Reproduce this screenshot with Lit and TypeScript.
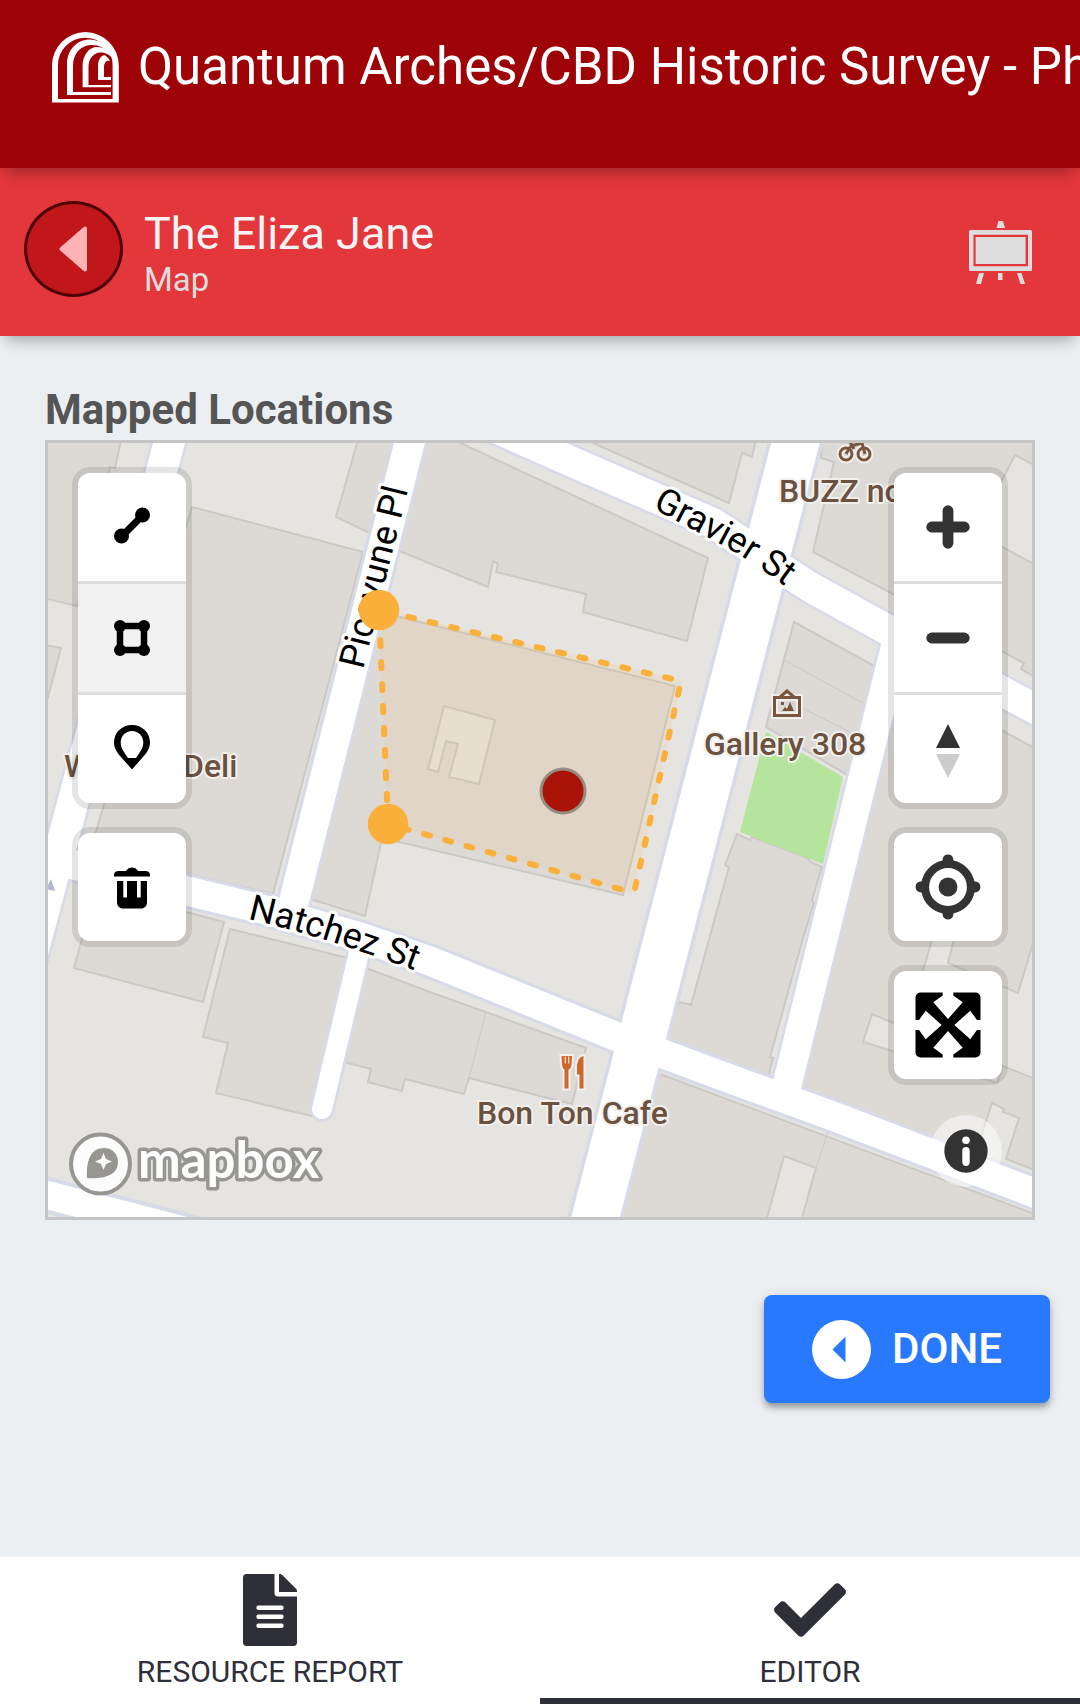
import { LitElement, html, svg, css } from "lit";
import { customElement, state } from "lit/decorators.js";
import { classMap } from "lit/directives/class-map.js";

/* Building footprints, in map units. */
const buildings: string[] = [
  "40,440 121,440 115,468 110,467 77,606 40,597",
  "40,644 61,648 48,697 40,720",
  "192,507 363,552 273,894 187,874 90,852",
  "358,440 336,517 368,532 402,552 488,587 493,561 498,564 496,572 586,594 583,612 687,641 708,558 454,440",
  "586,440 729,503 742,453 752,457 756,440",
  "384,613 675,686 623,895 382,838 365,916 304,897",
  "822,440 821,458 834,462 813,552 1024,663 1021,669 1040,680 1040,440",
  "794,622 878,668 851,777 766,727",
  "737,834 750,840 752,837 808,858 809,861 822,867 812,900 814,903 803,938 770,1057 773,1058 768,1078 664,1040 679,1002 691,1005 729,867 725,865",
  "900,676 1040,751 1040,1180 796,1090",
  "657,1073 1040,1216 1040,1225 615,1225",
  "96,888 224,922 203,1002 74,968",
  "230,929 352,959 312,1116 216,1093 228,1043 203,1037",
  "366,968 430,992 586,1048 572,1104 469,1078 464,1094 405,1079 402,1091 368,1082 371,1069 340,1061",
];

/* Courtyards and gaps cut out of the larger footprints. */
const yards: string[] = [
  "1015,455 1040,468 1040,567 985,538 1002,480",
  "444,706 495,720 479,784 449,777 458,744 446,741 438,772 428,769",
  "940,912 923,971 905,1028 872,1014 863,1042 997,1083 1003,1066 1040,1081 1040,920 1018,993 948,963 960,916",
  "992,1103 1004,1109 1003,1112 1019,1118 1006,1159 1040,1172 1040,1180 975,1155",
  "784,1156 816,1168 800,1225 765,1225",
];

const partyWalls: string[] = [
  "486,1012 469,1078",
  "784,660 863,703",
  "776,695 852,733",
  "816,1168 828,1132",
];

interface Road {
  line: string;
  casing: number;
  width: number;
}

const roads: Road[] = [
  { line: "172,432 20,1000", casing: 36, width: 31 },
  { line: "52,860 187,891 270,911 360,937 430,961 615,1036 725,1077 830,1115 1050,1199", casing: 35, width: 29 },
  { line: "412,433 293,905", casing: 36, width: 30 },
  { line: "362,940 322,1109", casing: 25, width: 20 },
  { line: "457,411 570,461 713,523 790,574 810,587 886,629 1050,717", casing: 35, width: 30 },
  { line: "798,433 593,1227", casing: 54, width: 47 },
  { line: "900,628 787,1085", casing: 34, width: 29 },
  { line: "20,1188 220,1240", casing: 36, width: 28 },
];

/* Sides of the drawn polygon, with the gap before the first dash. */
const sides: { d: string; lead: number }[] = [
  { d: "M379 610 681 681", lead: -30 },
  { d: "M681 681 634 893", lead: -8 },
  { d: "M634 893 388 824", lead: -14 },
  { d: "M388 824 379 610", lead: -24 },
];

const icon = {
  line: svg`<path d="M43 64 64 43" stroke="#000" stroke-width="7"/><circle cx="43.5" cy="63" r="7.5"/><circle cx="64.5" cy="42" r="7.5"/>`,
  polygon: svg`<rect x="42" y="42" width="24" height="24" fill="none" stroke="#000" stroke-width="6.5"/>
    <circle cx="42" cy="42" r="6"/><circle cx="66" cy="42" r="6"/><circle cx="66" cy="66" r="6"/><circle cx="42" cy="66" r="6"/>`,
  point: svg`<path fill-rule="evenodd" d="M54 30c-10 0-18 7.500-18 17.500 0 9 7 14 18 27 11-13 18-18 18-27C72 37.500 64 30 54 30zm0 6c6.500 0 11.300 5 11.300 11.500 0 6.500-4.300 10.500-7.300 15.500h-8c-3-5-7.300-9-7.300-15.500C42.700 41 47.500 36 54 36z"/>`,
  trash: svg`<path d="M36 43.500v-1.500c0-2.500 2-4 4.500-4H48c1.500-2.500 3.500-3.500 6-3.500s4.500 1 6 3.500h7.500c2.500 0 4.500 1.500 4.500 4v1.500z"/>
    <path d="M39 48h30v21c0 4-2.500 6.500-6 6.500H45c-3.500 0-6-2.500-6-6.500z"/><path fill="#fff" d="M45.300 48H49v16.500h-3.700zm13.700 0h3.700v16.500H59z"/>`,
  plus: svg`<path d="M54 37.700v32.600M37.700 54h32.600" stroke="#333" stroke-width="10.800" stroke-linecap="round"/>`,
  minus: svg`<path d="M37.700 54h32.600" stroke="#333" stroke-width="10.800" stroke-linecap="round"/>`,
  compass: svg`<path fill="#333" d="M42 53 54 29l12 24z"/><path fill="#ccc" d="m42 59 12 24 12-24z"/>`,
  locate: svg`<g transform="scale(5.4)" fill="#333"><path d="M10 4C9 4 9 5 9 5v.1A5 5 0 0 0 5.100 9H5s-1 0-1 1 1 1 1 1h.1A5 5 0 0 0 9 14.900v.1s0 1 1 1 1-1 1-1v-.1a5 5 0 0 0 3.900-3.900h.1s1 0 1-1-1-1-1-1h-.1A5 5 0 0 0 11 5.100V5s0-1-1-1zm0 2.500a3.500 3.500 0 1 1 0 7 3.500 3.500 0 1 1 0-7z"/><circle cx="10" cy="10" r="1.750"/></g>`,
  expand: svg`<g>${[
    "",
    "matrix(-1 0 0 1 108 0)",
    "matrix(1 0 0 -1 0 108)",
    "matrix(-1 0 0 -1 108 108)",
  ].map(
    (t) => svg`<path transform=${t} d="M21.500 49V26.500a5 5 0 0 1 5-5h22.200v3l-9.400 6.800L54 48v7h-5l-1.300-1L31.700 39.700 25 49z"/>`,
  )}</g>`,
};

@customElement("survey-map")
class SurveyMap extends LitElement {
  @state() private mode = "polygon";

  static styles = css`
    :host {
      display: block;
      position: relative;
      border: 3px solid #c5c5c5;
      overflow: hidden;
      background: #e5e4e0;
    }
    .canvas {
      display: block;
      width: 100%;
      height: auto;
    }
    .building {
      fill: #dddad6;
      stroke: #cbc9c5;
      stroke-width: 2;
    }
    .yard {
      fill: #e5e4e0;
      stroke: #cbc9c5;
      stroke-width: 2;
    }
    .wall {
      fill: none;
      stroke: #cbc9c5;
      stroke-width: 1;
    }
    .casing,
    .road {
      fill: none;
      stroke-linecap: round;
      stroke-linejoin: round;
    }
    .casing {
      stroke: #d7dae7;
    }
    .road {
      stroke: #fff;
    }
    .street,
    .place {
      font-family: Roboto, "Liberation Sans", sans-serif;
      paint-order: stroke;
      stroke-linejoin: round;
    }
    .street {
      font-size: 36px;
      fill: #000;
      stroke: #fff;
      stroke-width: 6;
    }
    .place {
      font-size: 32px;
      font-weight: 500;
      fill: #6b513f;
      stroke: #f2f0ed;
      stroke-width: 4;
    }
    .brand {
      font-family: Lato, "Liberation Sans", sans-serif;
      font-size: 51px;
      font-weight: 700;
      fill: #fcfcfc;
      stroke: #979692;
      stroke-width: 7;
      stroke-linejoin: round;
      paint-order: stroke;
    }
    .side {
      fill: none;
      stroke: #fbb03b;
      stroke-width: 6;
      stroke-linecap: round;
      stroke-dasharray: 6 16;
    }
    .controls {
      position: absolute;
      top: 30px;
      display: flex;
      flex-direction: column;
      gap: 30px;
    }
    .left {
      left: 30px;
    }
    .right {
      right: 30px;
    }
    .group {
      display: flex;
      flex-direction: column;
      border-radius: 12px;
      background: #fff;
      box-shadow: 0 0 0 6px rgba(0, 0, 0, 0.1);
      overflow: hidden;
    }
    .tool {
      box-sizing: content-box;
      width: 108px;
      height: 108px;
      padding: 0;
      border: 0;
      background: none;
      cursor: pointer;
    }
    .tool + .tool {
      border-top: 3px solid #ddd;
    }
    .tool.active {
      background: #f1f1f1;
    }
    .tool svg,
    .info svg {
      display: block;
      width: 100%;
      height: 100%;
    }
    .info {
      position: absolute;
      right: 30px;
      bottom: 30px;
      width: 72px;
      height: 72px;
      padding: 0;
      border: 0;
      border-radius: 50%;
      background: rgba(255, 255, 255, 0.5);
      cursor: pointer;
    }
  `;

  private tool(name: keyof typeof icon, label: string, selectable = false) {
    return html`<button
      type="button"
      class=${classMap({ tool: true, active: this.mode === name })}
      aria-label=${label}
      @click=${() => {
        if (selectable) this.mode = name;
      }}
    >
      <svg viewBox="0 0 108 108" aria-hidden="true">${icon[name]}</svg>
    </button>`;
  }

  render() {
    return html`
      <svg class="canvas" viewBox="48 443 984 774">
        <defs>
          <path id="natchez" d="M248 919Q335 939 450 984" />
          <path id="gravier" d="M652 508 722 545Q762 567 822 614" />
          <path id="picayune" d="M363 670 420 442" />
        </defs>
        ${buildings.map((p) => svg`<polygon class="building" points=${p} />`)}
        ${yards.map((p) => svg`<polygon class="yard" points=${p} />`)}
        ${partyWalls.map((p) => svg`<polyline class="wall" points=${p} />`)}
        <polygon points="766,732 843,777 823,864 740,832" fill="#b5e59c" />
        ${roads.map((r) => svg`<polyline class="casing" points=${r.line} stroke-width=${r.casing} />`)}
        ${roads.map((r) => svg`<polyline class="road" points=${r.line} stroke-width=${r.width} />`)}
        <path d="M51 879 55 891 46 889z" fill="#b3b7cf" />

        <text class="street"><textPath href="#natchez">Natchez St</textPath></text>
        <text class="street"><textPath href="#gravier">Gravier St</textPath></text>
        <text class="street"><textPath href="#picayune">Picayune Pl</textPath></text>

        <g fill="none" stroke="#f2f0ed" stroke-width="7">
          <circle cx="846" cy="454" r="6" /><circle cx="864" cy="454" r="6" />
          <path d="M774.500 697.500h25v18h-25z" />
        </g>
        <g fill="none" stroke="#7a563f" stroke-width="3">
          <circle cx="846" cy="454" r="6" /><circle cx="864" cy="454" r="6" />
          <path d="M846 454 851 446 862 443 M849 440 854 449 M862 443 865 454" />
          <path d="M774.500 697.500h25v18h-25zM780 697l7-6 7 6" />
        </g>
        <path d="M782 711l3-4 2 2 3-7 4 9zM781 702h3v3h-3z" fill="#7a563f" />
        <g stroke="#f2f0ed" stroke-width="4" paint-order="stroke" fill="#cf662a">
          <path d="M561.500 1056h10.500l-.5 9q-.5 3-3 5v18.500h-4v-18.500q-2-2-2.500-5z" />
          <path d="M583.500 1056v32.500h-4v-14h-2.500v-9.500q1-8 6.500-9z" />
        </g>
        <path d="M565.300 1056.500v7M568.700 1056.500v7" stroke="#f2d9c8" stroke-width="1.300" />
        <text class="place" x="477" y="1124">Bon Ton Cafe</text>
        <text class="place" x="704" y="755">Gallery 308</text>
        <text class="place" x="779" y="502">BUZZ no</text>
        <text class="place" x="64" y="777">W</text>
        <text class="place" x="183" y="777">Deli</text>

        <polygon points="379,610 682,680 634,893 388,824" fill="#fbb03b" fill-opacity=".1" />
        ${sides.map((s) => svg`<path class="side" d=${s.d} stroke-dashoffset=${s.lead} />`)}
        <circle cx="379" cy="610" r="20.300" fill="#fbb03b" />
        <circle cx="388" cy="824" r="20.300" fill="#fbb03b" />
        <circle cx="563" cy="791" r="22" fill="#aa1408" stroke="#948d81" stroke-width="3" />

        <circle cx="100.500" cy="1164" r="29.500" fill="#fcfcfc" stroke="#979692" stroke-width="4" />
        <path d="M87 1178c-1-16 3-30 17-30 8 0 14 6 14 14 0 14-15 17-31 16z" fill="#979692" />
        <path d="m103.500 1153 2.500 6 6 2.500-6 2.500-2.500 6-2.500-6-6-2.500 6-2.500z" fill="#fcfcfc" />
        <text class="brand" x="138" y="1178">mapbox</text>
      </svg>

      <div class="controls left">
        <div class="group">
          ${this.tool("line", "Draw line", true)} ${this.tool("polygon", "Draw polygon", true)}
          ${this.tool("point", "Draw point", true)}
        </div>
        <div class="group">${this.tool("trash", "Delete")}</div>
      </div>
      <div class="controls right">
        <div class="group">
          ${this.tool("plus", "Zoom in")} ${this.tool("minus", "Zoom out")} ${this.tool("compass", "Reset north")}
        </div>
        <div class="group">${this.tool("locate", "Find my location")}</div>
        <div class="group">${this.tool("expand", "Fullscreen")}</div>
      </div>
      <button type="button" class="info" aria-label="Attribution">
        <svg viewBox="0 0 72 72" aria-hidden="true">
          <circle cx="36" cy="36" r="21.700" fill="#333" />
          <circle cx="36" cy="25.300" r="3.800" fill="#fff" />
          <rect x="32.300" y="32" width="7.400" height="19" rx="3.700" fill="#fff" />
        </svg>
      </button>
    `;
  }
}

@customElement("app-root")
class AppRoot extends LitElement {
  static styles = css`
    :host {
      display: flex;
      flex-direction: column;
      min-height: 100vh;
      overflow: hidden;
      background: #ebeff2;
      font-family: Roboto, "Liberation Sans", sans-serif;
    }
    .top,
    .bar {
      position: relative;
      box-sizing: border-box;
      height: 168px;
      display: flex;
      box-shadow: 0 10px 14px -6px rgba(0, 0, 0, 0.32);
    }
    .top {
      z-index: 2;
      align-items: flex-start;
      gap: 19px;
      padding: 32px 0 0 52px;
      background: #9e0308;
      color: #fff;
    }
    .logo {
      flex: none;
      width: 67px;
      height: 71px;
    }
    .title {
      flex: 1;
      min-width: 0;
      margin: 0;
      overflow: hidden;
      white-space: nowrap;
      font-size: 51px;
      line-height: 70px;
      font-weight: 400;
    }
    .bar {
      z-index: 1;
      align-items: center;
      gap: 21px;
      padding: 0 48px 0 24px;
      background: #e3373b;
    }
    .back {
      flex: none;
      width: 99px;
      height: 96px;
      margin: 0 0 6px;
      padding: 0;
      border: 3px solid #4d0003;
      border-radius: 50%;
      background: #c1161a;
      cursor: pointer;
    }
    .back svg {
      display: block;
      width: 100%;
      height: 100%;
    }
    .heading {
      flex: 1;
      min-width: 0;
      padding-top: 3px;
    }
    .name {
      margin: 0;
      font-size: 45px;
      line-height: 52px;
      font-weight: 400;
      color: #f5f3f4;
    }
    .sub {
      margin: 0;
      font-size: 33px;
      line-height: 40px;
      color: #ddd;
    }
    .board {
      flex: none;
      width: 63px;
      height: 64px;
      padding: 0;
      border: 0;
      background: none;
      cursor: pointer;
    }
    .board svg {
      display: block;
      width: 100%;
      height: 100%;
    }
    .content {
      flex: 1;
    }
    .section {
      padding: 50px 45px 0;
    }
    .label {
      margin: 0 0 6px;
      font-size: 42px;
      line-height: 48px;
      font-weight: 700;
      color: #555;
    }
    .actions {
      display: flex;
      justify-content: flex-end;
      padding: 75px 30px;
    }
    .done {
      display: flex;
      align-items: center;
      gap: 21px;
      height: 108px;
      padding: 0 48px;
      border: 0;
      border-radius: 8px;
      background: #2979ff;
      box-shadow: 0 5px 6px -1px rgba(0, 0, 0, 0.32), 0 2px 14px rgba(0, 0, 0, 0.12);
      color: #fff;
      font: 500 42px/48px Roboto, "Liberation Sans", sans-serif;
      cursor: pointer;
    }
    .done svg {
      width: 59px;
      height: 59px;
    }
    .tabs {
      display: grid;
      grid-template-columns: 1fr 1fr;
      background: #fff;
    }
    .tab {
      display: flex;
      flex-direction: column;
      align-items: center;
      gap: 8px;
      padding: 17px 0 8px;
      border-bottom: 6px solid transparent;
      color: #2f2f39;
      font-size: 30px;
      line-height: 36px;
      text-decoration: none;
    }
    .tab.current {
      border-color: #2f2f39;
    }
    .tab svg {
      height: 72px;
      fill: #2f2f39;
    }
  `;

  render() {
    return html`
      <header class="top">
        <svg class="logo" viewBox="52 32 67 71" fill="#fff" aria-hidden="true">
          <path
            fill-rule="evenodd"
            d="M52 102.500V65.500a33.400 33.400 0 0 1 66.800 0v37zM58 99h54.600V65a27.300 27.300 0 0 0-54.600 0z"
          />
          <path d="M67 95V64C67 50 77 39.500 90 39.500c11 .5 20.500 7 22.500 17C106 48 99 45 92 45c-11 0-19 8-19 21v26h38v3z" />
          <path d="M82.600 87.300V66c0-11 6.400-19 14.400-19 8 0 13 4 15.500 11C108 53 103 52 99 52.500 92 54 88.500 60 88.500 67v18H111v2.300z" />
          <path d="M98 80V66c0-6 2.500-10 6.500-11 2.500 1.500 4.500 3.500 5.500 6-4-1-6 2-6 6v10h7v3z" />
        </svg>
        <h1 class="title">Quantum Arches/CBD Historic Survey - Ph</h1>
      </header>

      <div class="bar">
        <button type="button" class="back" aria-label="Back">
          <svg viewBox="0 0 93 90" aria-hidden="true">
            <path
              d="M34.500 45 58 24.500v41z"
              fill="#ffb1b4"
              stroke="#ffb1b4"
              stroke-width="4"
              stroke-linejoin="round"
            />
          </svg>
        </button>
        <div class="heading">
          <h2 class="name">The Eliza Jane</h2>
          <p class="sub">Map</p>
        </div>
        <button type="button" class="board" aria-label="Presentation">
          <svg viewBox="969 220 63 64" fill="#ddd" aria-hidden="true">
            <path d="M998.500 221h4.500l2 7h-8.500z" />
            <path
              fill-rule="evenodd"
              d="M970.500 230h60a1.500 1.500 0 0 1 1.500 1.500v38a1.500 1.500 0 0 1-1.500 1.500h-60a1.500 1.500 0 0 1-1.500-1.500v-38a1.500 1.500 0 0 1 1.500-1.500zM973.500 234.700v31.600H1028v-31.600z"
            />
            <path d="M975.600 237h50v27h-50zM979 273h5l-3 11h-5zM998 273h4.500v7H998zM1017 273h4.500l3.500 11h-4.500z" />
          </svg>
        </button>
      </div>

      <main class="content">
        <section class="section">
          <h3 class="label">Mapped Locations</h3>
          <survey-map></survey-map>
        </section>
        <div class="actions">
          <button type="button" class="done">
            <svg viewBox="0 0 59 59" aria-hidden="true">
              <circle cx="29.500" cy="29.500" r="29.500" fill="#fff" />
              <path d="M20.500 29.500 33.500 16.500v26z" fill="#2979ff" />
            </svg>
            <span>DONE</span>
          </button>
        </div>
      </main>

      <nav class="tabs">
        <a class="tab" href="#report">
          <svg viewBox="0 0 384 512" aria-hidden="true">
            <path
              d="M224 136V0H24C10.700 0 0 10.700 0 24v464c0 13.300 10.700 24 24 24h336c13.300 0 24-10.700 24-24V160H248c-13.200 0-24-10.800-24-24zm64 236c0 6.600-5.400 12-12 12H108c-6.600 0-12-5.400-12-12v-8c0-6.600 5.400-12 12-12h168c6.600 0 12 5.400 12 12v8zm0-64c0 6.600-5.400 12-12 12H108c-6.600 0-12-5.400-12-12v-8c0-6.600 5.400-12 12-12h168c6.600 0 12 5.400 12 12v8zm0-72v8c0 6.600-5.400 12-12 12H108c-6.600 0-12-5.400-12-12v-8c0-6.600 5.400-12 12-12h168c6.600 0 12 5.400 12 12zm96-114.100v6.100H256V0h6.100c6.400 0 12.500 2.500 17 7l97.900 98c4.500 4.500 7 10.600 7 16.900z"
            />
          </svg>
          <span>RESOURCE REPORT</span>
        </a>
        <a class="tab current" href="#editor" aria-current="page">
          <svg viewBox="0 0 512 512" aria-hidden="true">
            <path
              d="M173.898 439.404l-166.400-166.400c-9.997-9.997-9.997-26.206 0-36.204l36.203-36.204c9.997-9.998 26.207-9.998 36.204 0L192 312.690 432.095 72.596c9.997-9.997 26.207-9.997 36.204 0l36.203 36.204c9.997 9.997 9.997 26.206 0 36.204l-294.400 294.401c-9.998 9.997-26.207 9.997-36.204-.001z"
            />
          </svg>
          <span>EDITOR</span>
        </a>
      </nav>
    `;
  }
}
